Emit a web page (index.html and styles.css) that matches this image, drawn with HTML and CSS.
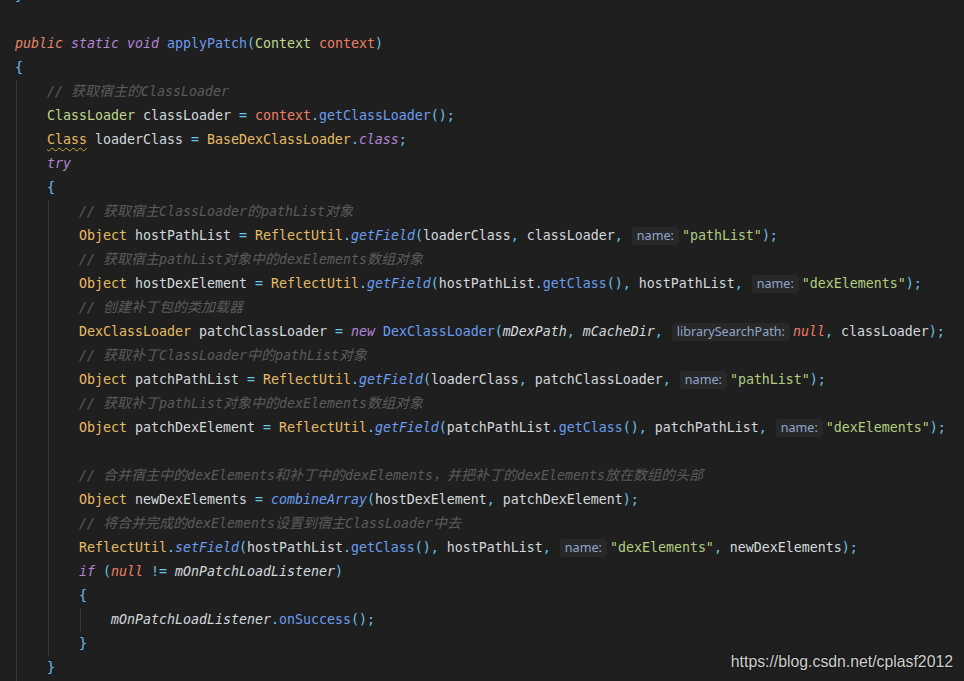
FILE: index.html
```html
<!DOCTYPE html>
<html lang="zh">
  <head>
    <meta charset="UTF-8" />
    <title>applyPatch</title>
    <link rel="stylesheet" href="styles.css">
  </head>
  <body>
    <div class="editor">
      <div class="line"><span class="p">}</span></div>
      <div class="line"></div>
      <div class="line"><span class="kp">public</span> <span class="k">static</span> <span class="k">void</span> <span class="fn">applyPatch</span><span class="p">(</span><span class="tc">Context</span> <span class="pa">context</span><span class="p">)</span></div>
      <div class="line"><span class="p">{</span></div>
      <div class="block">
        <div class="line"><span class="c">// <span class="zh">获取宿主的</span>ClassLoader</span></div>
        <div class="line"><span class="tc">ClassLoader</span> classLoader <span class="p">=</span> <span class="pa">context</span><span class="p">.</span><span class="fn">getClassLoader</span><span class="p">();</span></div>
        <div class="line"><span class="ty warn">Class</span> loaderClass <span class="p">=</span> <span class="ty">BaseDexClassLoader</span><span class="p">.</span><span class="k">class</span><span class="p">;</span></div>
        <div class="line"><span class="k">try</span></div>
        <div class="line"><span class="p">{</span></div>
        <div class="block">
          <div class="line"><span class="c">// <span class="zh">获取宿主</span>ClassLoader<span class="zh">的</span>pathList<span class="zh">对象</span></span></div>
          <div class="line"><span class="ty">Object</span> hostPathList <span class="p">=</span> <span class="ty">ReflectUtil</span><span class="p">.</span><span class="fn it">getField</span><span class="p">(</span>loaderClass<span class="p">,</span> classLoader<span class="p">,</span> <span class="hint">name:</span><span class="s">"pathList"</span><span class="p">);</span></div>
          <div class="line"><span class="c">// <span class="zh">获取宿主</span>pathList<span class="zh">对象中的</span>dexElements<span class="zh">数组对象</span></span></div>
          <div class="line"><span class="ty">Object</span> hostDexElement <span class="p">=</span> <span class="ty">ReflectUtil</span><span class="p">.</span><span class="fn it">getField</span><span class="p">(</span>hostPathList<span class="p">.</span><span class="fn">getClass</span><span class="p">(),</span> hostPathList<span class="p">,</span> <span class="hint">name:</span><span class="s">"dexElements"</span><span class="p">);</span></div>
          <div class="line"><span class="c">// <span class="zh">创建补丁包的类加载器</span></span></div>
          <div class="line"><span class="ty">DexClassLoader</span> patchClassLoader <span class="p">=</span> <span class="k">new</span> <span class="fn">DexClassLoader</span><span class="p">(</span><span class="f">mDexPath</span><span class="p">,</span> <span class="f">mCacheDir</span><span class="p">,</span> <span class="hint">librarySearchPath:</span><span class="pa it">null</span><span class="p">,</span> classLoader<span class="p">);</span></div>
          <div class="line"><span class="c">// <span class="zh">获取补丁</span>ClassLoader<span class="zh">中的</span>pathList<span class="zh">对象</span></span></div>
          <div class="line"><span class="ty">Object</span> patchPathList <span class="p">=</span> <span class="ty">ReflectUtil</span><span class="p">.</span><span class="fn it">getField</span><span class="p">(</span>loaderClass<span class="p">,</span> patchClassLoader<span class="p">,</span> <span class="hint">name:</span><span class="s">"pathList"</span><span class="p">);</span></div>
          <div class="line"><span class="c">// <span class="zh">获取补丁</span>pathList<span class="zh">对象中的</span>dexElements<span class="zh">数组对象</span></span></div>
          <div class="line"><span class="ty">Object</span> patchDexElement <span class="p">=</span> <span class="ty">ReflectUtil</span><span class="p">.</span><span class="fn it">getField</span><span class="p">(</span>patchPathList<span class="p">.</span><span class="fn">getClass</span><span class="p">(),</span> patchPathList<span class="p">,</span> <span class="hint">name:</span><span class="s">"dexElements"</span><span class="p">);</span></div>
          <div class="line"></div>
          <div class="line"><span class="c">// <span class="zh">合并宿主中的</span>dexElements<span class="zh">和补丁中的</span>dexElements<span class="zh">，并把补丁的</span>dexElements<span class="zh">放在数组的头部</span></span></div>
          <div class="line"><span class="ty">Object</span> newDexElements <span class="p">=</span> <span class="fn it">combineArray</span><span class="p">(</span>hostDexElement<span class="p">,</span> patchDexElement<span class="p">);</span></div>
          <div class="line"><span class="c">// <span class="zh">将合并完成的</span>dexElements<span class="zh">设置到宿主</span>ClassLoader<span class="zh">中去</span></span></div>
          <div class="line"><span class="ty">ReflectUtil</span><span class="p">.</span><span class="fn it">setField</span><span class="p">(</span>hostPathList<span class="p">.</span><span class="fn">getClass</span><span class="p">(),</span> hostPathList<span class="p">,</span> <span class="hint">name:</span><span class="s">"dexElements"</span><span class="p">,</span> newDexElements<span class="p">);</span></div>
          <div class="line"><span class="k">if</span> <span class="p">(</span><span class="pa it">null</span> <span class="p">!=</span> <span class="f">mOnPatchLoadListener</span><span class="p">)</span></div>
          <div class="line"><span class="p">{</span></div>
          <div class="block">
            <div class="line"><span class="f">mOnPatchLoadListener</span><span class="p">.</span><span class="fn">onSuccess</span><span class="p">();</span></div>
          </div>
          <div class="line"><span class="p">}</span></div>
        </div>
        <div class="line"><span class="p">}</span></div>
        <div class="line"></div>
      </div>
    </div>

    <div class="watermark">https://blog.csdn.net/cplasf2012</div>
  </body>
</html>
```

FILE: styles.css
```css
:root {
  --bg: #1f1f1f;
  --text: #d3d9dd;
  --purple: #b584d6;
  --orange: #e2866b;
  --blue: #6b9cf0;
  --cyan: #6cc3e6;
  --green: #bfd88e;
  --gold: #e6bb62;
  --salmon: #ee7e62;
  --string: #b3cd80;
  --comment: #5b5b5b;
  --guide: #393939;
  --hint-bg: #282828;
  --hint: #8ea6c8;
}

html,
body {
  margin: 0;
  height: 100%;
  overflow: hidden;
  background: var(--bg);
}

.editor {
  margin-top: -16px;
  padding-left: 15px;
  font-family: "DejaVu Sans Mono", "Noto Sans CJK SC", monospace;
  font-size: 13.29px;
  line-height: 24px;
  color: var(--text);
}

.line {
  height: 24px;
  white-space: pre;
}

.block {
  margin-left: 1px;
  padding-left: 30px;
  border-left: 1px solid var(--guide);
}

.k {
  color: var(--purple);
  font-style: italic;
}
.kp {
  color: var(--orange);
  font-style: italic;
}
.fn {
  color: var(--blue);
}
.p {
  color: var(--cyan);
}
.tc {
  color: var(--green);
}
.ty {
  color: var(--gold);
}
.pa {
  color: var(--salmon);
}
.s {
  color: var(--string);
}
.c {
  color: var(--comment);
  font-style: italic;
}
.zh {
  font-family: "Noto Sans CJK SC", sans-serif;
  font-size: 14px;
  line-height: 1;
}
.f {
  font-style: italic;
}
.it {
  font-style: italic;
}

.warn {
  text-decoration: underline wavy #c9a23a;
  text-decoration-thickness: 1px;
  text-underline-offset: 3px;
}

.hint {
  display: inline-block;
  margin: 0 3px 0 1px;
  padding: 0 5px;
  height: 18px;
  line-height: 18px;
  border-radius: 4px;
  background: var(--hint-bg);
  color: var(--hint);
  font-family: "Noto Sans", sans-serif;
  font-size: 12.6px;
  font-style: normal;
  vertical-align: 0;
}

.watermark {
  position: absolute;
  right: 11px;
  bottom: 10px;
  font-family: "Liberation Sans", Arial, sans-serif;
  font-size: 15.8px;
  color: #cfcfcf;
  text-shadow: 0 0 2px #000;
}
```
